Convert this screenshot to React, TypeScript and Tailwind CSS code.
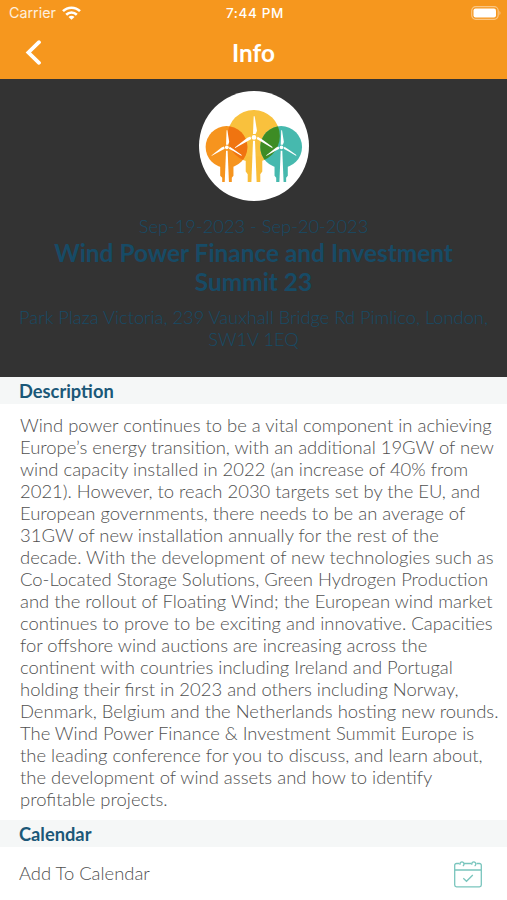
import { ReactNode } from "react";

const descriptionLines = [
    "Wind power continues to be a vital component in achieving",
    "Europe’s energy transition, with an additional 19GW of new",
    "wind capacity installed in 2022 (an increase of 40% from",
    "2021). However, to reach 2030 targets set by the EU, and",
    "European governments, there needs to be an average of",
    "31GW of new installation annually for the rest of the",
    "decade. With the development of new technologies such as",
    "Co-Located Storage Solutions, Green Hydrogen Production",
    "and the rollout of Floating Wind; the European wind market",
    "continues to prove to be exciting and innovative. Capacities",
    "for offshore wind auctions are increasing across the",
    "continent with countries including Ireland and Portugal",
    "holding their first in 2023 and others including Norway,",
    "Denmark, Belgium and the Netherlands hosting new rounds.",
    "The Wind Power Finance & Investment Summit Europe is",
    "the leading conference for you to discuss, and learn about,",
    "the development of wind assets and how to identify",
    "profitable projects.",
];

function StatusBar() {
    return (
        <div className="grid h-[27px] grid-cols-3 items-center pl-[9px] pr-[6px] font-[Inter,sans-serif] text-[13.5px] leading-none">
            <div className="flex items-center gap-[6px] text-white/85">
                <span className="text-[14.3px]">Carrier</span>
                <svg width="19" height="14" viewBox="0 0 19 14" fill="none" stroke="white" strokeWidth="2.6">
                    <path d="M1 5.200C5.700.500 13.300.500 18 5.200" />
                    <path d="M4.200 8.700c3-2.900 7.600-2.900 10.600 0" />
                    <path d="M9.500 13.800 6.500 10.900c1.700-1.500 4.300-1.500 6 0z" fill="white" stroke="none" />
                </svg>
            </div>
            <span className="text-center font-medium tracking-[0.65px] text-white">7:44 PM</span>
            <svg className="mb-px justify-self-end" width="30" height="14" viewBox="0 0 30 14">
                <rect x="0.700" y="0.700" width="26.500" height="12.600" rx="4" fill="none" stroke="white" strokeOpacity="0.45" strokeWidth="1.200" />
                <rect x="2.500" y="2.500" width="22.500" height="9" rx="2" fill="white" />
                <path d="M28.500 5v4c1.300-.6 1.300-3.400 0-4z" fill="white" fillOpacity="0.5" />
            </svg>
        </div>
    );
}

function NavBar() {
    return (
        <div className="grid h-[52px] grid-cols-3 items-center pb-px">
            <button className="ml-[25px] justify-self-start" aria-label="Back">
                <svg width="17" height="26" viewBox="0 0 17 26" fill="none" stroke="white" strokeWidth="3.800">
                    <path d="M14 2.200 3.400 12.500 14 22.800" strokeLinecap="round" strokeLinejoin="miter" />
                </svg>
            </button>
            <h1 className="pt-px text-center text-[24.300px] font-bold leading-none text-white">Info</h1>
        </div>
    );
}

type TurbineProps = {
    x: number;
    y: number;
    scale: number;
    base: number;
};

function Turbine({ x, y, scale, base }: TurbineProps) {
    return (
        <g fill="white">
            <path d={`M${x - 3 * scale} ${y + 10}L${x - 8 * scale} ${base}H${x + 8 * scale}L${x + 3 * scale} ${y + 10}z`} />
            <g transform={`translate(${x} ${y}) scale(${scale})`}>
                <circle r="7" />
                <path d="M-3-10-1-64 2-64 9-20 5-10z" />
                <path d="M-8 5-24 14-58 33-57 30-20 1-11-3z" />
                <path d="M8 5 24 14 56 33 55 28 24 6 11-2z" />
            </g>
        </g>
    );
}

function EventLogo() {
    return (
        <svg className="size-[110px]" viewBox="26 17 332 332">
            <defs>
                <clipPath id="sun">
                    <circle cx="191" cy="153" r="79" />
                </clipPath>
            </defs>
            <circle cx="192" cy="183" r="166" fill="white" />
            <circle cx="191" cy="153" r="79" fill="#f9c13d" />
            <path d="M167 215h50v45l-6 8v24H173v-24l-6-8z" fill="#f9bd39" />
            <circle cx="109" cy="186" r="63" fill="#f6941e" />
            <path d="M90 238h40v35l-5 6v13H96v-13l-6-6z" fill="#f6941e" />
            <circle cx="274" cy="186" r="63" fill="#46b9ae" />
            <path d="M254 238h40v35l-5 6v13h-30v-13l-5-6z" fill="#46b9ae" />
            <g clipPath="url(#sun)">
                <circle cx="109" cy="186" r="63" fill="#f07410" />
                <circle cx="274" cy="186" r="63" fill="#3d8c24" />
            </g>
            <Turbine x={192} y={157} scale={1} base={294} />
            <Turbine x={110} y={187} scale={0.8} base={294} />
            <Turbine x={275} y={187} scale={0.8} base={294} />
        </svg>
    );
}

function SectionTitle({ children }: { children: ReactNode }) {
    return (
        <h2 className="flex h-[27px] items-center bg-[#f5f7f7] pl-[19px] pt-[2px] text-[18.300px] font-bold leading-none text-[#1b5878]">
            {children}
        </h2>
    );
}

function CalendarIcon() {
    return (
        <svg width="28" height="28" viewBox="0 0 28 28" fill="none" stroke="#79c5bd" strokeWidth="1.300">
            <path d="M5.500 3.500H2.500a1.800 1.800 0 0 0-1.800 1.800v19.700a1.800 1.800 0 0 0 1.800 1.800h23a1.800 1.800 0 0 0 1.800-1.800V5.300a1.800 1.800 0 0 0-1.800-1.800h-3M10 3.500h7.500M.7 10h26.600" />
            <path d="M6.200 4.800a2 2 0 1 1 2.600 1M18 4.800a2 2 0 1 1 2.600 1" />
            <path d="m9.300 18.300 3.200 3 6.300-6.300" />
        </svg>
    );
}

export default function App() {
    return (
        <div className="h-[900px] w-[507px] overflow-hidden bg-white font-[Lato,sans-serif]">
            <header className="bg-[#f6971e]">
                <StatusBar />
                <NavBar />
            </header>

            <section className="flex h-[298px] flex-col items-center bg-[#333333] pt-3 text-center text-[#174b66]">
                <EventLogo />
                <p className="mt-[14px] text-[18.300px] font-light leading-[22px]">Sep-19-2023 - Sep-20-2023</p>
                <h2 className="mt-px text-[24.400px] font-bold leading-[29px]">
                    Wind Power Finance and Investment
                    <br />
                    Summit 23
                </h2>
                <p className="mt-[10px] whitespace-nowrap text-[18.300px] font-light leading-[22px]">
                    Park Plaza Victoria, 239 Vauxhall Bridge Rd Pimlico, London,
                    <br />
                    SW1V 1EQ
                </p>
            </section>

            <SectionTitle>Description</SectionTitle>
            <p className="h-[416px] whitespace-pre pl-5 pt-[10px] text-[18.450px] font-light leading-[22px] text-[#505050]">
                {descriptionLines.join("\n")}
            </p>

            <SectionTitle>Calendar</SectionTitle>
            <div className="flex h-[53px] items-center justify-between pl-[19px] pr-[25px]">
                <span className="text-[18.400px] font-light text-[#505050]">Add To Calendar</span>
                <CalendarIcon />
            </div>
        </div>
    );
}
